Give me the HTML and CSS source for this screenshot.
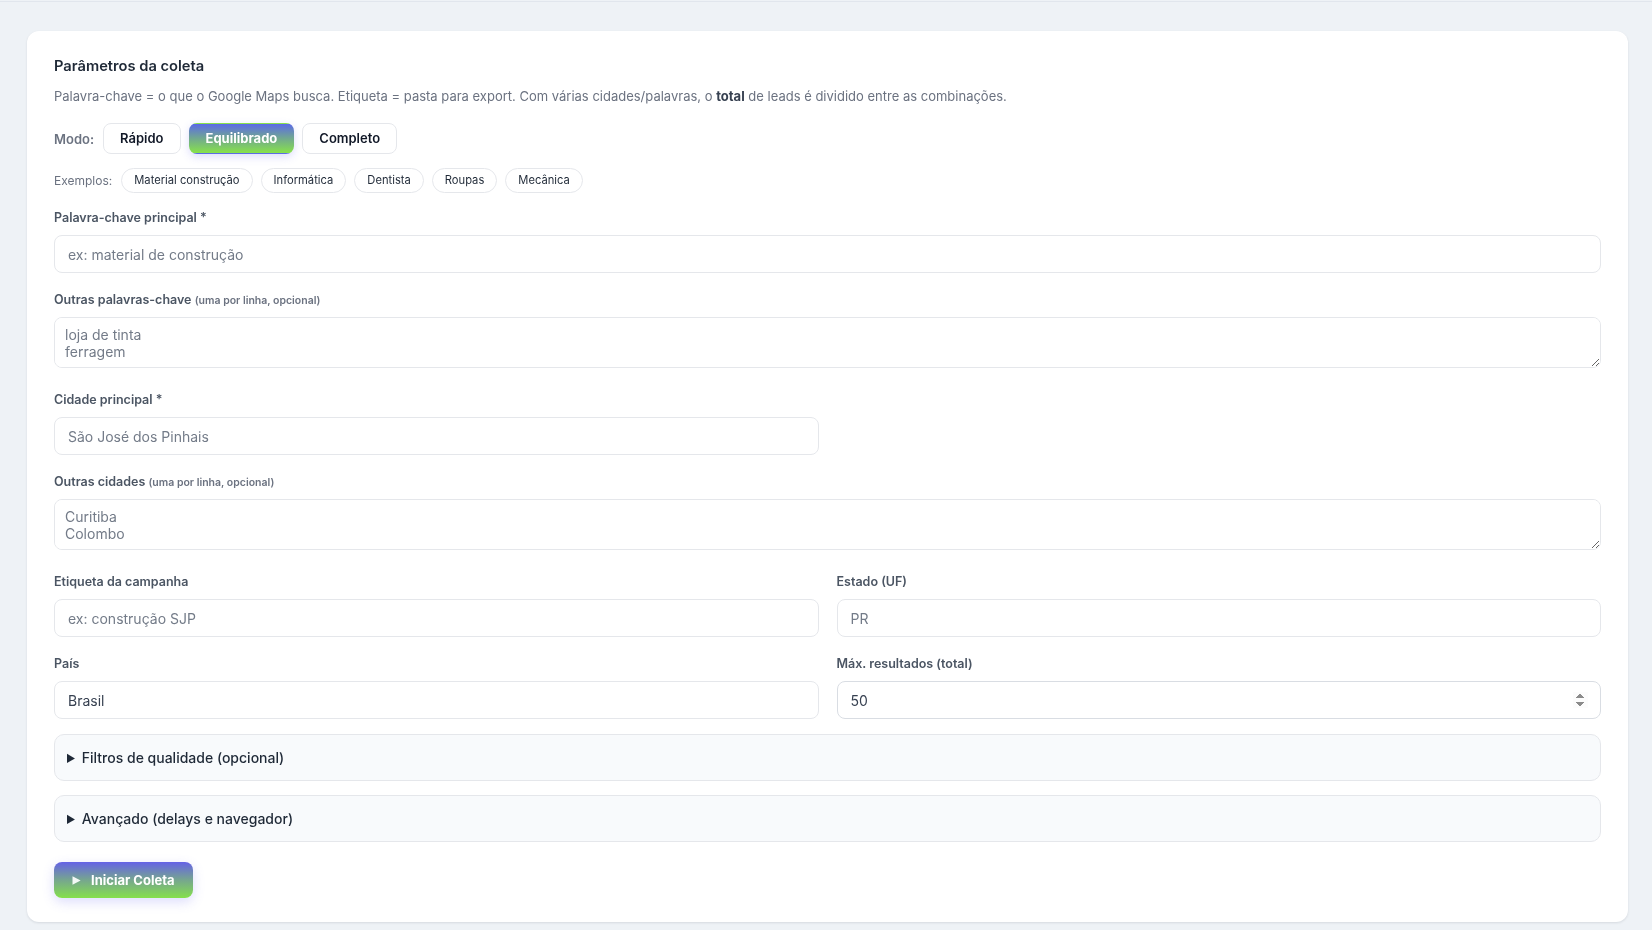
FILE: index.html
```html
<!DOCTYPE html>
<html lang="pt-BR">
<head>
<meta charset="utf-8">
<title>Parâmetros da coleta</title>
<link rel="stylesheet" href="styles.css">
</head>
<body>
<div class="topline"></div>
<main class="page">
  <section class="card">
    <h2 class="title">Parâmetros da coleta</h2>
    <p class="desc">Palavra-chave = o que o Google Maps busca. Etiqueta = pasta para export. Com várias cidades/palavras, o <strong>total</strong> de leads é dividido entre as combinações.</p>

    <div class="mode-row">
      <span class="mode-label">Modo:</span>
      <button class="mode-btn" type="button">Rápido</button>
      <button class="mode-btn active" type="button">Equilibrado</button>
      <button class="mode-btn" type="button">Completo</button>
    </div>

    <div class="chip-row">
      <span class="chip-label">Exemplos:</span>
      <button class="chip" type="button">Material construção</button>
      <button class="chip" type="button">Informática</button>
      <button class="chip" type="button">Dentista</button>
      <button class="chip" type="button">Roupas</button>
      <button class="chip" type="button">Mecânica</button>
    </div>

    <div class="field">
      <label class="label">Palavra-chave principal *</label>
      <input class="input" type="text" placeholder="ex: material de construção">
    </div>

    <div class="field field-ta">
      <label class="label">Outras palavras-chave <small>(uma por linha, opcional)</small></label>
      <textarea class="textarea" placeholder="loja de tinta&#10;ferragem"></textarea>
    </div>

    <div class="grid">
      <div class="field">
        <label class="label">Cidade principal *</label>
        <input class="input" type="text" placeholder="São José dos Pinhais">
      </div>
    </div>

    <div class="field field-ta">
      <label class="label">Outras cidades <small>(uma por linha, opcional)</small></label>
      <textarea class="textarea" placeholder="Curitiba&#10;Colombo"></textarea>
    </div>

    <div class="grid">
      <div class="field">
        <label class="label">Etiqueta da campanha</label>
        <input class="input" type="text" placeholder="ex: construção SJP">
      </div>
      <div class="field">
        <label class="label">Estado (UF)</label>
        <input class="input" type="text" placeholder="PR">
      </div>
    </div>

    <div class="grid grid-last">
      <div class="field">
        <label class="label">País</label>
        <input class="input" type="text" value="Brasil">
      </div>
      <div class="field">
        <label class="label">Máx. resultados (total)</label>
        <input class="input input-num" type="number" value="50">
      </div>
    </div>

    <details class="panel">
      <summary>Filtros de qualidade (opcional)</summary>
    </details>
    <details class="panel panel-last">
      <summary>Avançado (delays e navegador)</summary>
    </details>

    <button class="start-btn" type="button">
      <svg class="play" width="9" height="9" viewBox="0 0 9 9" aria-hidden="true"><path d="M0.5 0.3 L8.6 4.5 L0.5 8.7 Z" fill="#ffffff" fill-opacity="0.92"/></svg>
      <span>Iniciar Coleta</span>
    </button>
  </section>
</main>
</body>
</html>
```

FILE: styles.css
```css
* { box-sizing: border-box; }

html, body {
  margin: 0;
  background: #eef2f6;
}

body {
  font-family: Inter, "Noto Sans", "Liberation Sans", sans-serif;
  color: #1f2937;
}

.topline {
  height: 1px;
  margin-top: 1px;
  background: #e1e6ed;
}

.page {
  padding: 29px 24px 8px 27px;
}

.card {
  width: 1601px;
  background: #ffffff;
  border-radius: 12px;
  box-shadow: 0 1px 3px rgba(15, 23, 42, 0.07), 0 1px 2px rgba(15, 23, 42, 0.04);
  padding: 26px 27px 24px 27px;
}

.title {
  margin: 0 0 11px 0;
  font-size: 14.7px;
  line-height: 18px;
  font-weight: 600;
  color: #1f2937;
}

.desc {
  margin: 0 0 17px 0;
  font-size: 13px;
  line-height: 20px;
  color: #6b7280;
}

.desc strong {
  font-weight: 700;
  color: #374151;
}

.mode-row {
  display: flex;
  align-items: center;
  gap: 8px;
  margin-bottom: 14px;
}

.mode-label {
  font-size: 13px;
  font-weight: 600;
  color: #6b7280;
  margin-right: 1px;
}

.mode-btn {
  font-family: inherit;
  font-size: 13px;
  line-height: 17px;
  font-weight: 600;
  color: #111827;
  background: #ffffff;
  border: 1px solid #e5e7eb;
  border-radius: 8px;
  padding: 6px 16px;
  height: 31px;
  cursor: pointer;
}

.mode-btn.active {
  font-weight: 700;
  color: #ffffff;
  border-color: transparent;
  background: linear-gradient(180deg, #5b6ae6 0%, #71a98f 50%, #88e24a 100%);
  box-shadow: 0 3px 8px rgba(99, 102, 241, 0.22);
  text-shadow: 0 0 1px rgba(0, 0, 0, 0.1);
}

.chip-row {
  display: flex;
  align-items: center;
  gap: 8px;
  margin-bottom: 17px;
}

.chip-label {
  font-size: 12px;
  color: #6b7280;
  margin-right: 1px;
}

.chip {
  font-family: inherit;
  font-size: 11.2px;
  line-height: 15px;
  color: #1f2937;
  background: #ffffff;
  border: 1px solid #e5e7eb;
  border-radius: 999px;
  padding: 4px 12px;
  height: 25px;
  cursor: pointer;
}

.field {
  margin-bottom: 19px;
}

.field-ta {
  margin-bottom: 24px;
}

.label {
  display: block;
  height: 16px;
  font-size: 12.5px;
  line-height: 16px;
  font-weight: 600;
  color: #4b5563;
  margin-bottom: 9px;
}

.label small {
  font-size: 10.5px;
  line-height: 1;
  font-weight: 600;
  color: #6b7280;
}

.input {
  display: block;
  width: 100%;
  height: 38px;
  font-family: inherit;
  font-size: 14px;
  line-height: 17px;
  color: #374151;
  background: #ffffff;
  border: 1px solid #e5e7eb;
  border-radius: 8px;
  padding: 0 13px;
  outline: none;
}

.input::placeholder {
  color: #737b88;
}

.input-num {
  border-color: #d9dde3;
  padding-right: 12px;
}

.input-num::-webkit-inner-spin-button,
.input-num::-webkit-outer-spin-button {
  opacity: 1;
}

.textarea {
  display: block;
  width: 100%;
  height: 51px;
  font-family: inherit;
  font-size: 14px;
  line-height: 17px;
  color: #374151;
  background: #ffffff;
  border: 1px solid #e5e7eb;
  border-radius: 8px;
  padding: 8px 10px;
  resize: vertical;
  outline: none;
}

.textarea::placeholder {
  color: #737b88;
}

.grid {
  display: grid;
  grid-template-columns: 1fr 1fr;
  column-gap: 18px;
}

.grid-last .field {
  margin-bottom: 15px;
}

.panel {
  background: #f8fafc;
  border: 1px solid #e5e7eb;
  border-radius: 10px;
  margin-bottom: 14px;
}

.panel-last {
  margin-bottom: 20px;
}

.panel summary {
  padding: 14px 12px;
  font-size: 14px;
  line-height: 17px;
  font-weight: 500;
  color: #1f2937;
  cursor: pointer;
}

.start-btn {
  display: flex;
  align-items: center;
  gap: 10px;
  height: 36px;
  padding: 0 18px;
  font-family: inherit;
  font-size: 13px;
  font-weight: 700;
  color: #ffffff;
  border: none;
  border-radius: 8px;
  background: linear-gradient(180deg, #6562e6 0%, #76a68f 50%, #85e04b 100%);
  box-shadow: 0 4px 12px rgba(99, 102, 241, 0.22);
  cursor: pointer;
}

.play {
  display: block;
}
```
